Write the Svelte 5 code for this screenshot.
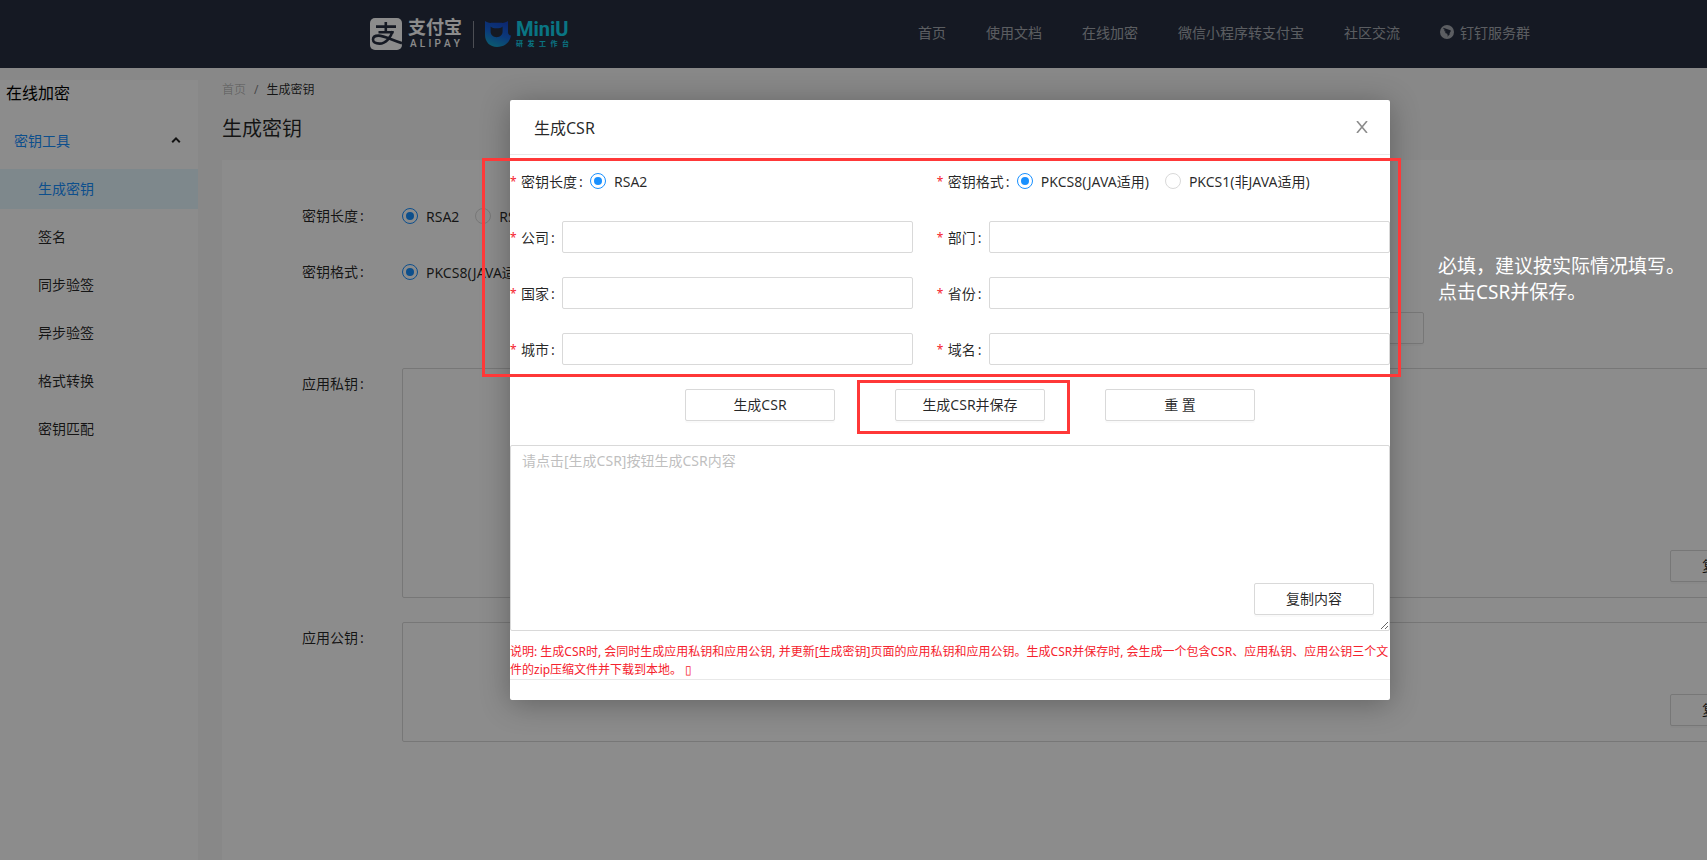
<script>
  const navItems = ['首页', '使用文档', '在线加密', '微信小程序转支付宝', '社区交流'];
  const menuItems = ['生成密钥', '签名', '同步验签', '异步验签', '格式转换', '密钥匹配'];

  const csrFields = [
    { id: 'company', label: '公司' },
    { id: 'department', label: '部门' },
    { id: 'country', label: '国家' },
    { id: 'province', label: '省份' },
    { id: 'city', label: '城市' },
    { id: 'domain', label: '域名' },
  ];

  let activeItem = $state('生成密钥');
  let keyLength = $state('RSA2');
  let keyFormat = $state('PKCS8');
  let csrLength = $state('RSA2');
  let csrFormat = $state('PKCS8');
  let privateKey = $state('');
  let publicKey = $state('');
  let csrContent = $state('');
  let csr = $state({
    company: '',
    department: '',
    country: '',
    province: '',
    city: '',
    domain: '',
  });

  function reset() {
    for (const field of csrFields) {
      csr[field.id] = '';
    }
    csrContent = '';
  }

  function copy(text) {
    navigator.clipboard?.writeText(text);
  }
</script>

<div class="viewport">
  <div class="page">
    <header class="header">
      <div class="header-inner">
        <a class="brand" href="#home" aria-label="支付宝 MiniU">
          <svg class="alipay-icon" viewBox="0 0 32 32" aria-hidden="true">
            <rect width="32" height="32" rx="5" fill="#fff" />
            <g fill="none" stroke="#272f41" stroke-width="2.6">
              <path d="M6 8.6H26M15.8 4V14.4M8.5 14.2H23.6" />
              <path d="M22.6 13.2C21 19 16 25.6 9.5 25.6C5 25.6 3 23.8 3 21.6C3 19 5 17.6 8.5 17.6C14 17.6 22 22 32 25.2" />
            </g>
          </svg>
          <span class="alipay-name">
            <span class="alipay-cn">支付宝</span>
            <span class="alipay-en">
              {#each 'ALIPAY' as letter}<span>{letter}</span>{/each}
            </span>
          </span>
          <span class="brand-divider"></span>
          <svg class="miniu-icon" viewBox="0 0 26 26" aria-hidden="true">
            <defs>
              <linearGradient id="miniu" x1="0.7" y1="0" x2="0.3" y2="1">
                <stop offset="0" stop-color="#1747cc" />
                <stop offset="0.5" stop-color="#1567de" />
                <stop offset="1" stop-color="#14a8cc" />
              </linearGradient>
            </defs>
            <path
              fill="url(#miniu)"
              fill-rule="evenodd"
              d="M0 0C2 1 4 2.4 7 1.8H16C19 2.4 21 1 23 0V11C23 13 24 14.4 26 14.6C25 21 20 26 12 26C5 26 0 21 0 14ZM5.6 5.4C7.4 7 9 7.2 11.600 7.200C14 7.200 16 7 17.600 5.400V10.600C17.600 14 15.200 16.200 11.600 16.200C8 16.200 5.600 14 5.600 10.600Z"
            />
          </svg>
          <span class="miniu-name">
            <span class="miniu-en">MiniU</span>
            <span class="miniu-cn">
              {#each '研发工作台' as letter}<span>{letter}</span>{/each}
            </span>
          </span>
        </a>
        <nav class="nav">
          {#each navItems as item}
            <a href="#nav">{item}</a>
          {/each}
          <a class="nav-ding" href="#ding">
            <svg viewBox="0 0 14 14" aria-hidden="true">
              <circle cx="7" cy="7" r="7" fill="currentColor" />
              <path fill="#272f41" d="M3.2 2.8L10.4 5.2C11 5.5 10.9 6 10.6 6.6L9.3 8.7H10.2L7.4 11.8L7.900 9.600H6.900L7.200 8.600C5.800 8.600 5.300 7.800 5 7.200L6.300 7C4.800 6.600 4.200 6 4 5.200L5.600 5.300C4.200 4.700 3.200 4 3.200 2.800Z" />
            </svg>
            钉钉服务群
          </a>
        </nav>
      </div>
    </header>

    <div class="body">
      <aside class="sidebar">
        <h2>在线加密</h2>
        <button class="menu-group" type="button">
          密钥工具
          <svg viewBox="0 0 10 8" aria-hidden="true">
            <path d="M1.2 6.200L5 2.400L8.800 6.200" fill="none" stroke="#222" stroke-width="2" />
          </svg>
        </button>
        <ul class="menu">
          {#each menuItems as item}
            <li>
              <a href="#menu" class:active={item === activeItem} onclick={() => (activeItem = item)}>{item}</a>
            </li>
          {/each}
        </ul>
      </aside>

      <main class="main">
        <div class="breadcrumb">
          <a href="#home">首页</a>
          <span class="slash">/</span>
          <span>生成密钥</span>
        </div>
        <h1>生成密钥</h1>
        <section class="card">
          <div class="form-row">
            <span class="form-label">密钥长度</span>
            <div class="radios">
              <label><input type="radio" value="RSA2" bind:group={keyLength} />RSA2</label>
              <label><input type="radio" value="RSA" bind:group={keyLength} />RSA</label>
            </div>
          </div>
          <div class="form-row">
            <span class="form-label">密钥格式</span>
            <div class="radios">
              <label><input type="radio" value="PKCS8" bind:group={keyFormat} />PKCS8(JAVA适用)</label>
              <label><input type="radio" value="PKCS1" bind:group={keyFormat} />PKCS1(非JAVA适用)</label>
            </div>
          </div>
          <div class="form-row form-buttons">
            <div class="form-actions">
              <button class="btn wide" type="button">生成CSR</button>
            </div>
          </div>
          <div class="form-row">
            <label class="form-label" for="private-key">应用私钥</label>
            <div class="key-box">
              <textarea id="private-key" class="private-key" bind:value={privateKey}></textarea>
              <button class="btn copy" type="button" onclick={() => copy(privateKey)}>复制内容</button>
            </div>
          </div>
          <div class="form-row">
            <label class="form-label" for="public-key">应用公钥</label>
            <div class="key-box">
              <textarea id="public-key" class="public-key" bind:value={publicKey}></textarea>
              <button class="btn copy" type="button" onclick={() => copy(publicKey)}>复制内容</button>
            </div>
          </div>
        </section>
      </main>
    </div>

    <div class="mask">
      <div class="modal" role="dialog" aria-modal="true" aria-labelledby="modal-title">
        <div class="modal-header">
          <h3 id="modal-title">生成CSR</h3>
          <button class="close" type="button" aria-label="关闭">
            <svg viewBox="0 0 12 12" aria-hidden="true">
              <path d="M1 0L11 12M11 0L1 12" fill="none" stroke="currentColor" stroke-width="1.6" />
            </svg>
          </button>
        </div>

        <form class="csr-form">
          <div class="field">
            <span class="field-label">密钥长度</span>
            <div class="radios">
              <label><input type="radio" value="RSA2" bind:group={csrLength} />RSA2</label>
            </div>
          </div>
          <div class="field">
            <span class="field-label">密钥格式</span>
            <div class="radios">
              <label><input type="radio" value="PKCS8" bind:group={csrFormat} />PKCS8(JAVA适用)</label>
              <label><input type="radio" value="PKCS1" bind:group={csrFormat} />PKCS1(非JAVA适用)</label>
            </div>
          </div>
          {#each csrFields as field}
            <div class="field">
              <label class="field-label" for={field.id}>{field.label}</label>
              <input class="text-input" id={field.id} type="text" bind:value={csr[field.id]} />
            </div>
          {/each}
        </form>

        <div class="csr-actions">
          <button class="btn wide" type="button">生成CSR</button>
          <button class="btn wide" type="button">生成CSR并保存</button>
          <button class="btn wide" type="button" onclick={reset}>重 置</button>
        </div>

        <div class="key-box">
          <textarea
            class="csr-content"
            aria-label="CSR内容"
            placeholder="请点击[生成CSR]按钮生成CSR内容"
            bind:value={csrContent}
          ></textarea>
          <button class="btn copy" type="button" onclick={() => copy(csrContent)}>复制内容</button>
        </div>
        <p class="tip">
          说明: 生成CSR时, 会同时生成应用私钥和应用公钥, 并更新[生成密钥]页面的应用私钥和应用公钥。生成CSR并保存时, 会生成一个包含CSR、应用私钥、应用公钥三个文件的zip压缩文件并下载到本地。 ▯
        </p>
        <div class="modal-footer"></div>

        <div class="mark mark-form"></div>
        <div class="mark mark-save"></div>
        <p class="note">必填，建议按实际情况填写。<br />点击CSR并保存。</p>
      </div>
    </div>
  </div>
</div>

<style>
  :global(body) {
    margin: 0;
  }

  .viewport {
    overflow: hidden;
    font-family: "Noto Sans", "Noto Sans CJK SC", sans-serif;
    font-size: 14px;
    color: rgba(0, 0, 0, 0.85);
  }

  .viewport :is(h1, h2, h3, p, ul) {
    margin: 0;
    padding: 0;
    font-weight: 400;
    list-style: none;
  }

  .viewport :is(button, input, textarea) {
    box-sizing: border-box;
    margin: 0;
    font: inherit;
    color: inherit;
  }

  a {
    color: inherit;
    text-decoration: none;
  }

  .page {
    position: relative;
    display: flex;
    flex-direction: column;
    min-width: 1900px;
    min-height: 100vh;
    background: #f8f8f8;
  }

  /* header */
  .header {
    height: 68px;
    background: #272f41;
  }

  .header-inner {
    display: flex;
    align-items: center;
    justify-content: space-between;
    max-width: 1160px;
    height: 100%;
    margin: 0 auto;
  }

  .brand {
    display: flex;
    align-items: center;
    font-family: Roboto, "Noto Sans CJK SC", sans-serif;
  }

  .alipay-icon {
    width: 32px;
    height: 32px;
  }

  .alipay-name {
    display: flex;
    flex-direction: column;
    width: 54px;
    margin-left: 6px;
    color: #fff;
  }

  .alipay-cn {
    font-size: 18px;
    font-weight: 700;
    line-height: 20px;
  }

  .alipay-en {
    display: flex;
    justify-content: space-between;
    padding: 0 2px;
    font-size: 10px;
    font-weight: 500;
    line-height: 12px;
  }

  .brand-divider {
    width: 1px;
    height: 27px;
    margin: 0 11px;
    background: #8a8f9a;
  }

  .miniu-icon {
    width: 26px;
    height: 26px;
  }

  .miniu-name {
    display: flex;
    flex-direction: column;
    width: 53px;
    margin-left: 5px;
    color: #12d6ee;
  }

  .miniu-en {
    font-size: 20px;
    font-weight: 700;
    line-height: 20px;
  }

  .miniu-cn {
    display: flex;
    justify-content: space-between;
    font-size: 7px;
    font-weight: 700;
    line-height: 10px;
  }

  .nav {
    display: flex;
    gap: 40px;
    padding-bottom: 4px;
    color: rgba(255, 255, 255, 0.6);
  }

  .nav-ding {
    display: flex;
    align-items: center;
    gap: 6px;
  }

  .nav-ding svg {
    width: 14px;
    height: 14px;
  }

  .body {
    display: flex;
    flex: 1;
  }

  /* sidebar */
  .sidebar {
    width: 198px;
    margin-top: 12px;
    background: #fff;
  }

  .sidebar h2 {
    padding-left: 6px;
    font-size: 16px;
    line-height: 26px;
    color: #000;
  }

  .sidebar .menu-group {
    display: flex;
    align-items: center;
    justify-content: space-between;
    width: 100%;
    height: 40px;
    margin: 14px 0 9px;
    padding: 0 17px 0 14px;
    border: 0;
    background: none;
    color: #1890ff;
  }

  .menu-group svg {
    width: 10px;
    height: 8px;
  }

  .menu {
    display: flex;
    flex-direction: column;
    gap: 8px;
  }

  .menu a {
    display: block;
    padding-left: 38px;
    line-height: 40px;
  }

  .menu a.active {
    background: #e6f7ff;
    color: #1890ff;
  }

  /* main */
  .main {
    flex: 1;
    display: flex;
    flex-direction: column;
    padding: 12px 24px 0;
  }

  .breadcrumb {
    display: flex;
    gap: 8px;
    font-size: 12px;
    line-height: 20px;
  }

  .breadcrumb a {
    color: rgba(0, 0, 0, 0.25);
  }

  .breadcrumb .slash {
    color: rgba(0, 0, 0, 0.5);
  }

  .main h1 {
    margin: 13px 0 15px;
    font-size: 20px;
    line-height: 32px;
  }

  .card {
    flex: 1;
    padding: 36px 70px 0 80px;
    background: #fff;
  }

  .form-row {
    display: flex;
    align-items: flex-start;
    margin-bottom: 16px;
  }

  .form-label {
    width: 100px;
    line-height: 40px;
  }

  .form-label::after {
    content: ':';
    padding-left: 2px;
  }

  .form-buttons {
    padding-left: 100px;
  }

  .form-actions {
    display: flex;
    flex: 1;
    justify-content: flex-end;
    max-width: 1022px;
    padding: 4px 0;
  }

  .form-row .key-box {
    flex: 1;
    padding: 4px 0;
  }

  .form-row .key-box .copy {
    bottom: 20px;
  }

  .radios {
    display: flex;
    align-items: center;
    gap: 16px;
    height: 40px;
  }

  .radios label {
    display: flex;
    align-items: center;
    gap: 8px;
    white-space: nowrap;
  }

  .radios input {
    display: grid;
    place-items: center;
    width: 16px;
    height: 16px;
    appearance: none;
    border: 1px solid #d9d9d9;
    border-radius: 50%;
    background: #fff;
  }

  .radios input:checked {
    border-color: #1890ff;
  }

  .radios input:checked::before {
    content: '';
    width: 8px;
    height: 8px;
    border-radius: 50%;
    background: #1890ff;
  }

  .key-box {
    position: relative;
    display: flex;
  }

  .key-box textarea {
    width: 100%;
    padding: 4px 11px;
    border: 1px solid #d9d9d9;
    border-radius: 2px;
    background: #fff;
    line-height: 22px;
  }

  .key-box textarea::placeholder {
    color: #bfbfbf;
  }

  .key-box .copy {
    position: absolute;
    right: 16px;
    bottom: 16px;
    width: 120px;
  }

  .key-box .private-key {
    height: 230px;
  }

  .key-box .public-key {
    height: 120px;
  }

  .viewport .btn {
    height: 32px;
    padding: 0 0 2px;
    border: 1px solid #d9d9d9;
    border-radius: 2px;
    background: #fff;
    box-shadow: 0 2px 0 rgba(0, 0, 0, 0.02);
  }

  .btn.wide {
    width: 150px;
  }

  /* modal */
  .mask {
    position: absolute;
    inset: 0;
    display: flex;
    align-items: flex-start;
    justify-content: center;
    padding-top: 100px;
    background: rgba(0, 0, 0, 0.45);
  }

  .modal {
    position: relative;
    width: 880px;
    border-radius: 2px;
    background: #fff;
    box-shadow: 0 4px 30px rgba(0, 0, 0, 0.3);
  }

  .modal-header {
    display: flex;
    align-items: center;
    justify-content: space-between;
    height: 54px;
    padding: 0 22px 0 24px;
    border-bottom: 1px solid #e8e8e8;
  }

  .modal-header h3 {
    font-size: 16px;
  }

  .modal-header .close {
    display: flex;
    padding: 0;
    border: 0;
    background: none;
    color: #8c8c8c;
  }

  .close svg {
    width: 12px;
    height: 12px;
  }

  .csr-form {
    display: grid;
    grid-template-columns: 8fr 9fr;
    gap: 16px 24px;
    padding-top: 6px;
  }

  .field {
    display: flex;
    align-items: center;
    height: 40px;
  }

  .field-label {
    display: flex;
    align-items: center;
    white-space: nowrap;
  }

  .field-label::before {
    content: '*';
    width: 11px;
    font-size: 12px;
    color: #f5222d;
  }

  .field-label::after {
    content: ':';
    width: 11px;
    padding-left: 2px;
  }

  .field .text-input {
    flex: 1;
    min-width: 0;
    height: 32px;
    padding: 4px 11px;
    border: 1px solid #d9d9d9;
    border-radius: 2px;
  }

  .csr-actions {
    display: flex;
    justify-content: center;
    gap: 60px;
    padding: 20px 0 24px 40px;
  }

  .key-box .csr-content {
    height: 186px;
    resize: vertical;
  }

  .modal .tip {
    padding-top: 12px;
    font-size: 12px;
    line-height: 18px;
    color: #f5222d;
  }

  .modal-footer {
    height: 20px;
    border-top: 1px solid #e8e8e8;
  }

  /* callouts drawn over the dialog */
  .mark {
    position: absolute;
    box-sizing: border-box;
    border: 3px solid #ff3838;
    pointer-events: none;
  }

  .mark-form {
    top: 58px;
    left: -28px;
    right: -11px;
    height: 219px;
  }

  .mark-save {
    top: 280px;
    left: 347px;
    width: 213px;
    height: 54px;
  }

  .modal .note {
    position: absolute;
    top: 153px;
    left: calc(100% + 48px);
    font-size: 19px;
    line-height: 26px;
    color: #fff;
    white-space: nowrap;
  }
</style>
